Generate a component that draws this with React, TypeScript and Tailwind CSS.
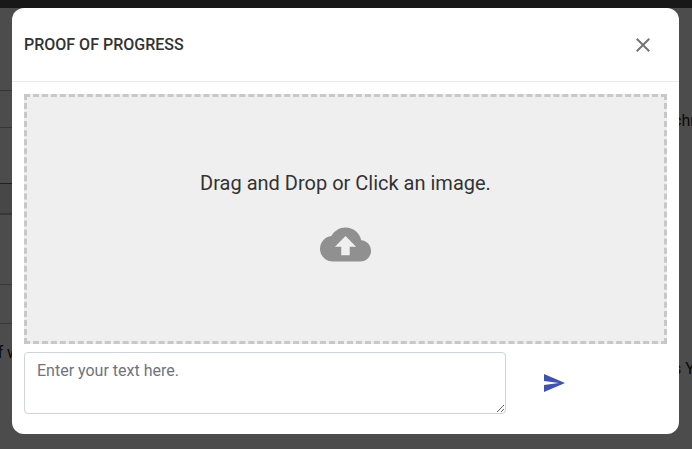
import { useState } from "react"
import { MdClose, MdCloudUpload, MdSend } from "react-icons/md"

// rows of the form that stays behind the dialog
const rows = [
  "h-[83px] border-b border-[#b4b4b4]",
  "h-[37px] border-b border-[#b4b4b4]",
  "h-14 border-b border-[#6c6c6c]",
  "h-[31px] border-b-2 border-[#b8b8d0] bg-[#eeeef2]",
  "h-[70px] border-b border-[#c4c4c4]",
  "h-[39px] border-b border-[#c4c4c4]",
]

function Background() {
  return (
    <div aria-hidden="true" className="flex h-screen flex-col overflow-hidden bg-white text-base text-[#212529]">
      <div className="h-2 shrink-0 bg-[#505050]" />
      <div className="flex flex-1 justify-between">
        <div className="w-[19px]">
          {rows.map((row, i) => (
            <div key={i} className={row} />
          ))}
          <p className="mt-[17px] flex justify-end whitespace-nowrap">f w</p>
        </div>
        <div className="w-[19px] whitespace-nowrap">
          <p className="mt-[101px]">chr</p>
          <p className="mt-56">s Y</p>
        </div>
      </div>
    </div>
  )
}

export default function App() {
  const [open, setOpen] = useState(true)
  const [text, setText] = useState("")

  return (
    <div className="font-[Roboto,sans-serif]">
      <Background />
      {open && (
        <div className="fixed inset-0 bg-black/70 pt-2 pr-[13px] pl-3">
          <div role="dialog" aria-modal="true" aria-labelledby="titulo" className="rounded-xl bg-white text-[#333333]">
            <header className="flex min-h-[74px] items-center justify-between border-b border-[#e9ecef] px-3">
              <h2 id="titulo" className="text-base font-medium">PROOF OF PROGRESS</h2>
              <button type="button" aria-label="Close" onClick={() => setOpen(false)} className="p-3 text-[#757575]">
                <MdClose size={24} />
              </button>
            </header>

            <form onSubmit={e => e.preventDefault()} className="px-3 pt-3 pb-5">
              <label className="flex h-[250px] cursor-pointer flex-col items-center justify-center gap-[22px] border-3 border-dashed border-[#c8c8c8] bg-[#efefef]">
                <span className="text-xl">Drag and Drop or Click an image.</span>
                <MdCloudUpload size={51} className="text-[#909090]" />
                <input type="file" accept="image/*" className="sr-only" />
              </label>

              <div className="mt-2 flex items-center gap-6">
                <textarea
                  aria-label="Text"
                  placeholder="Enter your text here."
                  value={text}
                  onChange={e => setText(e.target.value)}
                  className="h-[62px] w-3/4 rounded border border-[#ced4da] px-3 py-1.5 text-base placeholder:text-[#6c757d]"
                />
                <button type="submit" aria-label="Send" className="p-3 text-[#3f51b5]">
                  <MdSend size={24} />
                </button>
              </div>
            </form>
          </div>
        </div>
      )}
    </div>
  )
}
